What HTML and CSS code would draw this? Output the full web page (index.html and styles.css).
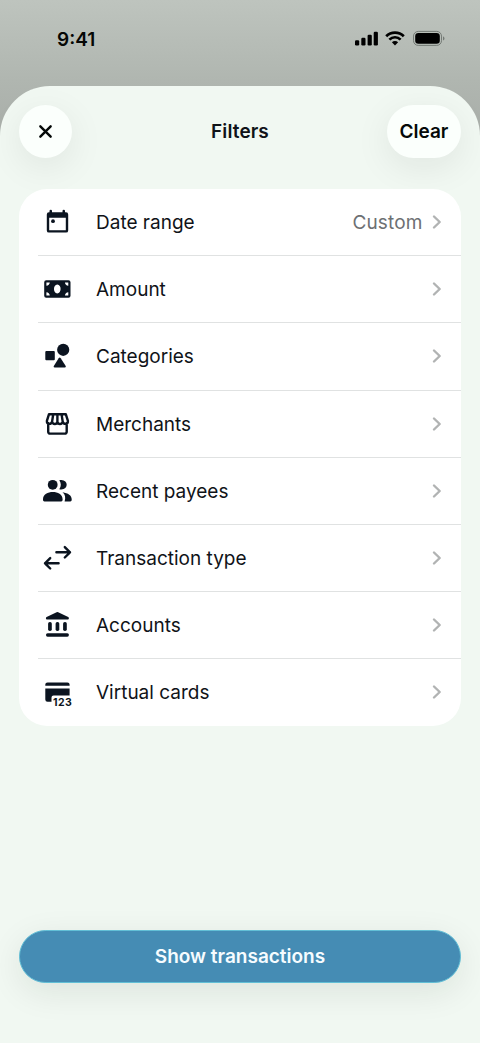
FILE: index.html
```html
<!DOCTYPE html>
<html lang="en">
<head>
<meta charset="utf-8">
<meta name="viewport" content="width=device-width, initial-scale=1">
<title>Filters</title>
<link rel="stylesheet" href="styles.css">
</head>
<body>
<div class="screen">
  <div class="status">
    <span class="time">9:41</span>
    <svg class="status-icons" width="90" height="18" viewBox="0 0 90 18">
      <rect x="0" y="10.2" width="4.2" height="5.3" rx="1.2"/>
      <rect x="6.3" y="7.8" width="4.2" height="7.7" rx="1.2"/>
      <rect x="12.6" y="4.8" width="4.2" height="10.7" rx="1.2"/>
      <rect x="18.7" y="1.8" width="4.2" height="13.7" rx="1.2"/>
      <g fill="none" stroke="#000" stroke-width="2.7">
        <path d="M31.2 6.200a12.400 12.400 0 0 1 17.600 0"/>
        <path d="M34.400 9.600a7.900 7.900 0 0 1 11.200 0"/>
      </g>
      <path d="M36.900 12.200a4.400 4.400 0 0 1 6.200 0L40 15.400z"/>
      <rect x="58.5" y="1.400" width="28" height="14" rx="4.700" fill="none" stroke="#747a75"/>
      <rect x="60.200" y="3.100" width="24.600" height="10.600" rx="3.200"/>
      <path d="M88 6.200c2 .9 2 3.500 0 4.400z" fill="#747a75"/>
    </svg>
  </div>
  <main class="sheet">
    <header class="bar">
      <button class="pill close" aria-label="Close">
        <svg width="15" height="15" viewBox="0 0 16 16"><path d="M2.500 2.500 13.500 13.500M13.500 2.500 2.500 13.500"/></svg>
      </button>
      <h1 class="title">Filters</h1>
      <button class="pill clear">Clear</button>
    </header>
    <ul class="list">
      <li class="row">
        <svg class="icon" viewBox="0 0 32 32"><path fill-rule="evenodd" d="M8.500 6.200V5a1.200 1.200 0 0 1 2.500 0v1.200h10.500V5a1.200 1.200 0 0 1 2.500 0v1.200h1a2.200 2.200 0 0 1 2.200 2.200v16a2.200 2.200 0 0 1-2.200 2.200H8a2.200 2.200 0 0 1-2.200-2.200v-16A2.200 2.200 0 0 1 8 6.200zM8.200 11.800v12.400h16.600V11.800z"/><circle cx="12" cy="15.200" r="1.900"/></svg>
        <span class="label">Date range</span><span class="value">Custom</span>
        <svg class="chevron" viewBox="0 0 10 16"><path d="m2 2.500 5.700 5.500L2 13.500"/></svg>
      </li>
      <li class="row">
        <svg class="icon" viewBox="0 0 32 32"><path fill-rule="evenodd" d="M5.200 7.200h22.300a2 2 0 0 1 2 2v13.600a2 2 0 0 1-2 2H5.200a2 2 0 0 1-2-2V9.200a2 2 0 0 1 2-2zM5.400 9.400v3.400a4 4 0 0 0 3.400-3.400zM27.300 9.400h-3.400a4 4 0 0 0 3.400 3.400zM5.400 22.600h3.400a4 4 0 0 0-3.400-3.400zM27.300 22.600v-3.400a4 4 0 0 0-3.400 3.400zM16.300 11.600c-4.400 0-4.400 8.800 0 8.800s4.400-8.800 0-8.800z"/></svg>
        <span class="label">Amount</span>
        <svg class="chevron" viewBox="0 0 10 16"><path d="m2 2.500 5.700 5.500L2 13.500"/></svg>
      </li>
      <li class="row">
        <svg class="icon" viewBox="0 0 32 32"><rect x="4.300" y="11" width="9.500" height="9.300" rx="1"/><circle cx="22.200" cy="9.800" r="6.100"/><path d="M17.700 18.200q1-1.500 2 0l5 7.900q.7 1.400-.8 1.400h-10.300q-1.500 0-.8-1.400z"/></svg>
        <span class="label">Categories</span>
        <svg class="chevron" viewBox="0 0 10 16"><path d="m2 2.500 5.700 5.500L2 13.500"/></svg>
      </li>
      <li class="row">
        <svg class="icon line" viewBox="0 0 32 32"><path d="M7.200 15v8.800a1.800 1.800 0 0 0 1.800 1.800h14.900a1.800 1.800 0 0 0 1.800-1.800V15M8 6.200h16.800l2.100 6.600c.3 3.800-4.300 4-5.200.8-.6 3.200-4.900 3.200-5.300 0-.4 3.200-4.700 3.200-5.300 0-.9 3.200-5.500 3-5.200-.8zM12.200 6.500l-1.100 7.100M16.400 6.500v7.100M20.600 6.500l1.100 7.100"/></svg>
        <span class="label">Merchants</span>
        <svg class="chevron" viewBox="0 0 10 16"><path d="m2 2.500 5.700 5.500L2 13.500"/></svg>
      </li>
      <li class="row">
        <svg class="icon" viewBox="0 0 32 32"><circle cx="11.700" cy="9.800" r="4.900"/><path d="M2 24.300c0-9.700 19.600-9.700 19.600 0v.8a1.400 1.400 0 0 1-1.400 1.400H3.400A1.400 1.400 0 0 1 2 25.100zM18.300 5.300c9.900-2 9.900 11 0 9 2-2.700 2-6.300 0-9zM21.500 17.300c5.600.8 9.200 3.300 9.200 7v.8a1.400 1.400 0 0 1-1.400 1.400h-5.700c1.200-3.600.7-7-2.100-9.200z"/></svg>
        <span class="label">Recent payees</span>
        <svg class="chevron" viewBox="0 0 10 16"><path d="m2 2.500 5.700 5.500L2 13.500"/></svg>
      </li>
      <li class="row">
        <svg class="icon line" viewBox="0 0 32 32"><path d="M15.400 10.300H29M23.800 5.100l5.200 5.200-5.200 5.200M17.600 21.300H4M9.200 16.100 4 21.300l5.200 5.200"/></svg>
        <span class="label">Transaction type</span>
        <svg class="chevron" viewBox="0 0 10 16"><path d="m2 2.500 5.700 5.500L2 13.500"/></svg>
      </li>
      <li class="row">
        <svg class="icon" viewBox="0 0 32 32"><path d="M15.600 3.300q.8-.4 1.600 0l10 4.800q.7.400.7 1.100 0 1.300-1.100 1.300H6q-1.100 0-1.100-1.300 0-.7.700-1.100z"/><rect x="7.100" y="13" width="3.700" height="8.900" rx="1.700"/><rect x="14.600" y="13" width="3.700" height="8.900" rx="1.700"/><rect x="22.100" y="13" width="3.700" height="8.900" rx="1.700"/><rect x="5" y="24.200" width="22.900" height="3.500" rx="1.600"/></svg>
        <span class="label">Accounts</span>
        <svg class="chevron" viewBox="0 0 10 16"><path d="m2 2.500 5.700 5.500L2 13.500"/></svg>
      </li>
      <li class="row">
        <svg class="icon" viewBox="0 0 32 32"><path d="M4.300 9.800V8.600A2.200 2.200 0 0 1 6.500 6.400h19.900a2.200 2.200 0 0 1 2.200 2.200v1.200zM4.300 12.600h24.300v6.800H12.500a2 2 0 0 0-2 2v4.400H6.500A2.200 2.200 0 0 1 4.300 23.600z"/><text x="12.100" y="29.900" class="digits" textLength="18.700">123</text></svg>
        <span class="label">Virtual cards</span>
        <svg class="chevron" viewBox="0 0 10 16"><path d="m2 2.500 5.700 5.500L2 13.500"/></svg>
      </li>
    </ul>
    <button class="submit">Show transactions</button>
  </main>
</div>
</body>
</html>
```
FILE: styles.css
```css
* { box-sizing: border-box; }
body { margin: 0; font-family: Inter, "Liberation Sans", sans-serif; color: #101318; }
button { font: inherit; color: inherit; border: 0; padding: 0; }
.screen {
  height: 1043px;
  display: flex;
  flex-direction: column;
  overflow: hidden;
  background: linear-gradient(#bec4be 0, #b0b6b0 80px, #a8ada8 140px);
}
.status {
  height: 86px;
  flex: none;
  display: flex;
  justify-content: space-between;
  align-items: flex-start;
  padding: 28px 35px 0 57px;
}
.time { font-size: 19px; font-weight: 600; line-height: 24px; color: #050705; }
.status-icons { margin-top: 2px; }
.sheet {
  flex: 1;
  display: flex;
  flex-direction: column;
  padding: 19px 19px 60px;
  border-radius: 50px 50px 0 0;
  background: #f1f8f2;
}
.bar {
  display: grid;
  grid-template-columns: 74px 1fr 74px;
  align-items: center;
  height: 53px;
}
.pill {
  height: 53px;
  border-radius: 27px;
  background: #fbfffc;
  box-shadow: 0 9px 36px rgba(20, 30, 25, .08);
  font-size: 19px;
  font-weight: 600;
  color: #050908;
}
.close { width: 53px; display: grid; place-items: center; padding-right: 1px; }
.close path { stroke: #050908; stroke-width: 2.600; stroke-linecap: round; }
.title { margin: 0; text-align: center; font-size: 19px; line-height: 23px; font-weight: 600; letter-spacing: .1px; }
.list {
  list-style: none;
  margin: 31px 0 0;
  padding: 0;
  height: 537px;
  display: grid;
  grid-template-rows: repeat(8, 67.200px);
  border-radius: 28px;
  background: #fff;
}
.row {
  display: flex;
  align-items: center;
  margin-left: 19px;
  padding: 0 19px 0 3px;
  border-bottom: 1px solid #e0e2e2;
}
.row:last-child { border-bottom-color: transparent; }
.icon { width: 32px; height: 32px; flex: none; fill: #0b1420; }
.line { fill: none; stroke: #0b1420; stroke-width: 2.400; stroke-linecap: round; stroke-linejoin: round; }
.digits { font-size: 10.500px; font-weight: 700; }
.label { margin-left: 23px; padding-top: 1.800px; flex: 1; font-size: 19px; line-height: 26px; white-space: nowrap; }
.value { padding-top: 1.800px; font-size: 19px; line-height: 26px; letter-spacing: .15px; color: #6d7073; margin-right: 9.500px; }
.chevron { width: 10px; height: 16px; fill: none; stroke: #b1b3b3; stroke-width: 2.400; stroke-linecap: round; stroke-linejoin: round; }
.submit {
  height: 53px;
  margin-top: auto;
  border: 1px solid #62bfd6;
  border-radius: 27px;
  background: #458cb4;
  color: #f6fcff;
  font-size: 19px;
  line-height: 23px;
  font-weight: 600;
  box-shadow: 0 9px 34px rgba(20, 30, 25, .09);
}
```
